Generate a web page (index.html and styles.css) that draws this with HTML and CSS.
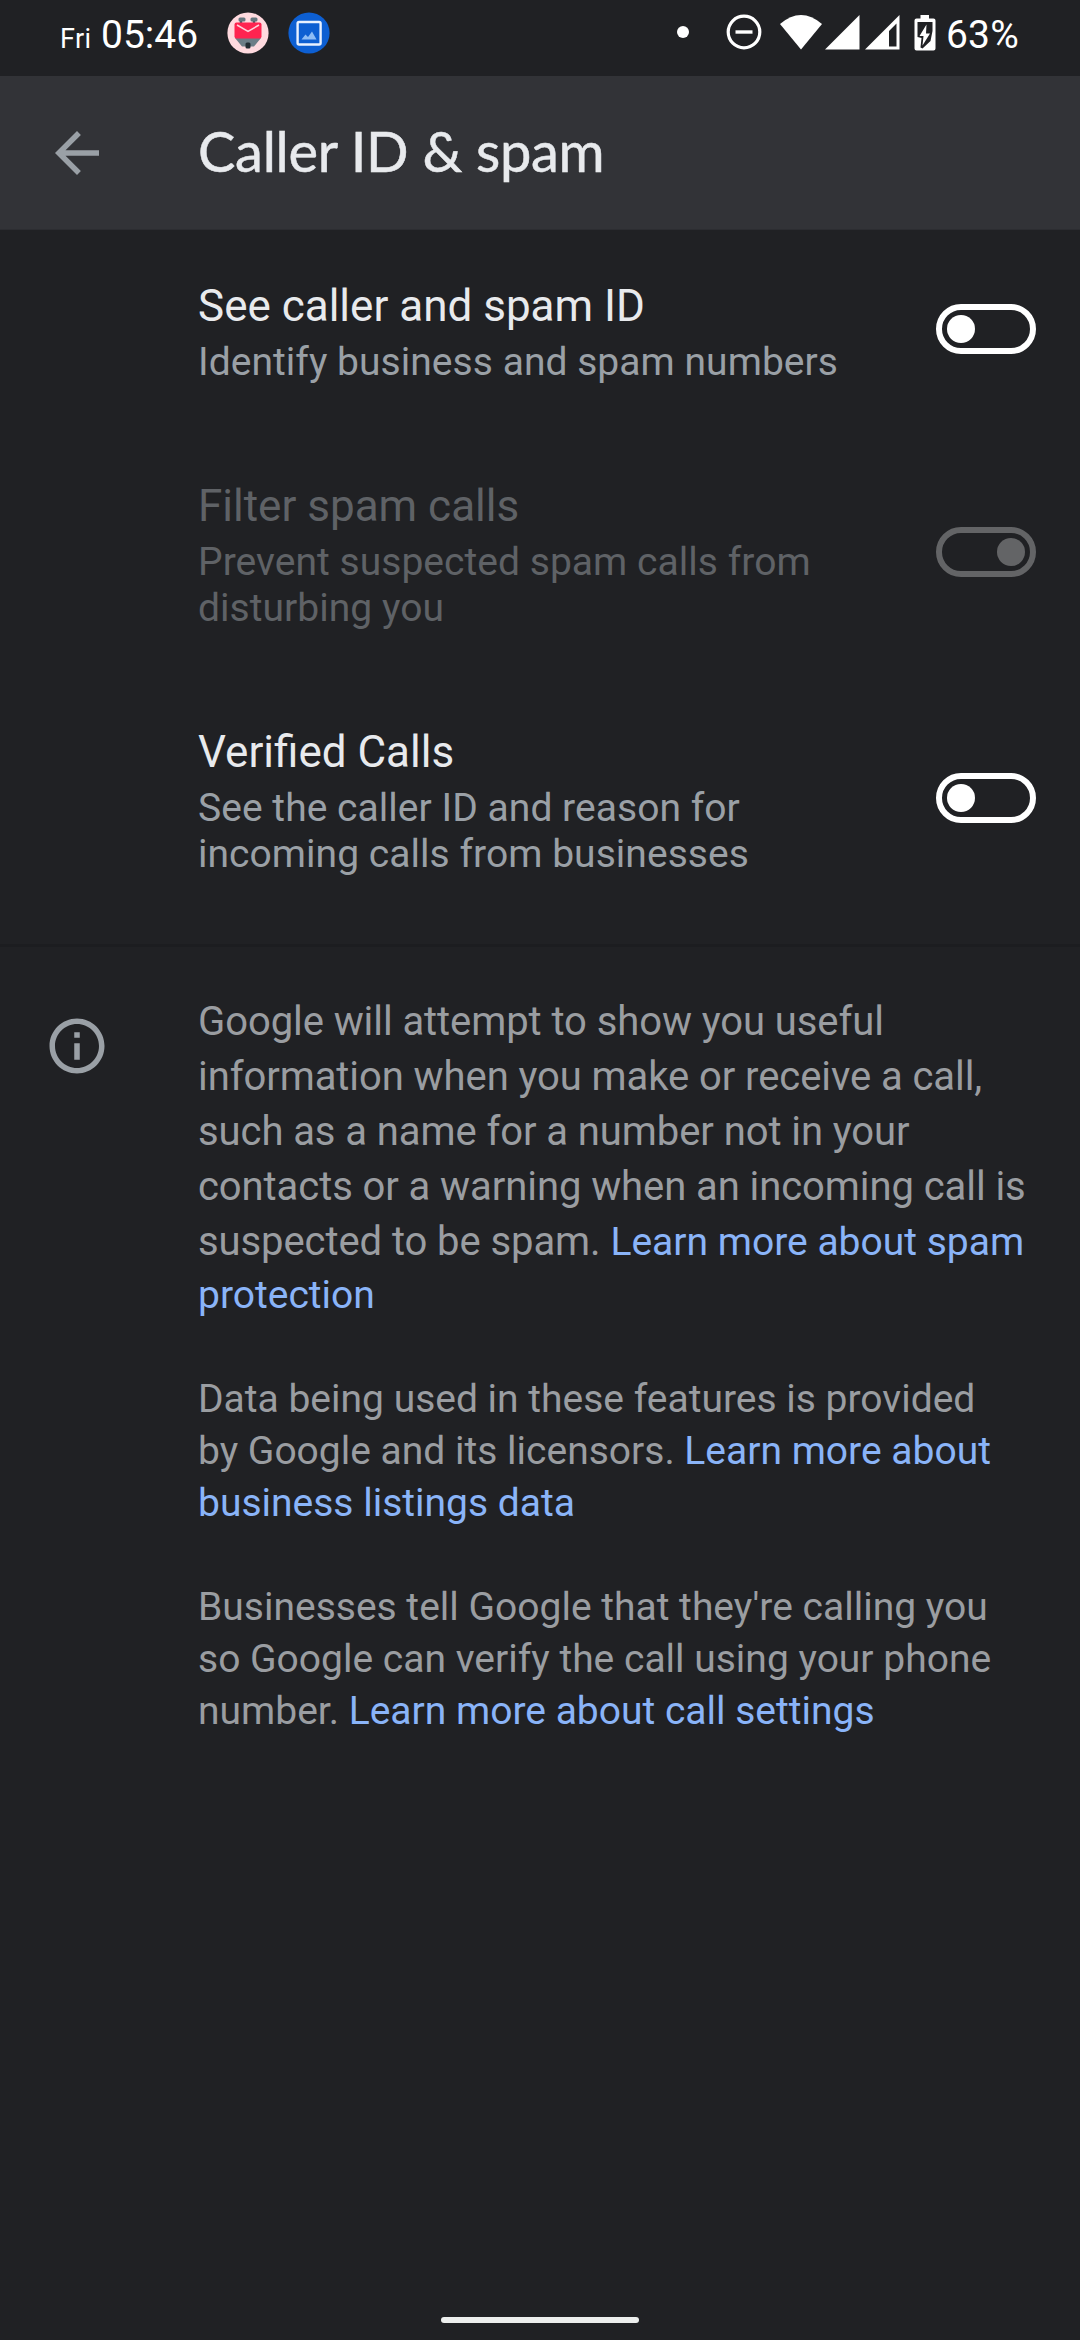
FILE: index.html
```
<!DOCTYPE html>
<html lang="en">
<head>
<meta charset="utf-8">
<title>Caller ID &amp; spam</title>
<link rel="stylesheet" href="styles.css">
</head>
<body>
<div class="screen">
  <header class="status">
    <span class="day">Fri</span>
    <span class="clock">05:46</span>
    <svg class="note note-mail" width="42" height="42" viewBox="0 0 42 42">
      <circle cx="21" cy="21" r="20.6" fill="#ffdadf"/>
      <path d="M14 8v4M27 8v4" stroke="#42545f" stroke-width="2.4"/>
      <rect x="11.5" y="5.5" width="7" height="4" rx="1.5" fill="#65777f"/>
      <rect x="23.5" y="5.5" width="7" height="4" rx="1.5" fill="#65777f"/>
      <path d="M8 26h26l-7 8.500H15z" fill="#6c7e87"/>
      <rect x="7.500" y="10.500" width="27" height="16" rx="2" fill="#ff2450"/>
      <path d="M10 13l11 6.500L32 13" fill="none" stroke="#ffd3dc" stroke-width="1.500"/>
      <rect x="18.500" y="30.500" width="5" height="6" rx="1.500" fill="#222d33"/>
    </svg>
    <svg class="note note-photo" width="42" height="42" viewBox="0 0 42 42">
      <circle cx="21" cy="21" r="20.6" fill="#0d5fd2"/>
      <rect x="9.600" y="10" width="23" height="22.500" rx="1.500" fill="none" stroke="#e8f1ff" stroke-width="2.400"/>
      <path d="M13.500 27.500l4-5 2.500 2.500 4-5.500 4.500 8z" fill="#8dbcf5"/>
    </svg>
    <svg class="dot" width="12" height="12" viewBox="0 0 12 12"><circle cx="6" cy="6" r="6" fill="#fff"/></svg>
    <svg class="dnd" width="36" height="36" viewBox="0 0 36 36">
      <circle cx="18" cy="18" r="15.800" fill="none" stroke="#fff" stroke-width="3.200"/>
      <path d="M9.500 18h17" stroke="#fff" stroke-width="3.400"/>
    </svg>
    <svg class="wifi" width="42" height="35" viewBox="0 0 42 35"><path d="M0 9Q21-9 42 9L21 34.500z" fill="#fff"/></svg>
    <svg class="signal" width="35" height="35" viewBox="0 0 35 35"><path d="M34.500 0v34.500H0z" fill="#fff"/></svg>
    <svg class="signal" width="35" height="35" viewBox="0 0 35 35"><path fill-rule="evenodd" d="M34.500 0v34.500H0zM31.500 8.500L24 16v15.500h7.500z" fill="#fff"/></svg>
    <svg class="battery" width="22" height="36" viewBox="0 0 22 36">
      <path d="M6.500 0h8.500v3.500h4.500a2 2 0 0 1 2 2v28a2 2 0 0 1-2 2h-17a2 2 0 0 1-2-2v-28a2 2 0 0 1 2-2h4z" fill="#fff"/>
      <path d="M3.500 7h15v9l-2 10-8 7.500-2-1 1-9.500-4-1z" fill="#202124"/>
      <path d="M12.500 9.500L5.500 21h4l-1 9.500 7.500-12h-4z" fill="#fff"/>
    </svg>
    <span class="percent">63%</span>
  </header>

  <div class="toolbar">
    <svg class="back" width="66" height="66" viewBox="0 0 24 24"><path d="M20 11H7.830l5.590-5.590L12 4l-8 8 8 8 1.410-1.410L7.830 13H20z" fill="#9aa0a6"/></svg>
    <h1 class="heading">Caller ID &amp; spam</h1>
  </div>

  <main>
    <section class="settings">
      <div class="row">
        <div class="text">
          <div class="title">See caller and spam ID</div>
          <div class="summary">Identify business and spam numbers</div>
        </div>
        <div class="switch"><i class="knob"></i></div>
      </div>
      <div class="row disabled">
        <div class="text">
          <div class="title">Filter spam calls</div>
          <div class="summary">Prevent suspected spam calls from<br>disturbing you</div>
        </div>
        <div class="switch on"><i class="knob"></i></div>
      </div>
      <div class="row">
        <div class="text">
          <div class="title">Verified Calls</div>
          <div class="summary">See the caller ID and reason for<br>incoming calls from businesses</div>
        </div>
        <div class="switch"><i class="knob"></i></div>
      </div>
    </section>

    <section class="info">
      <svg class="info-icon" width="66" height="66" viewBox="0 0 24 24"><path d="M11 7h2v2h-2zm0 4h2v6h-2zm1-9C6.480 2 2 6.480 2 12s4.480 10 10 10 10-4.480 10-10S17.520 2 12 2zm0 18c-4.410 0-8-3.590-8-8s3.590-8 8-8 8 3.590 8 8-3.590 8-8 8z" fill="#9aa0a6"/></svg>
      <div class="prose">
        <div class="lead">Google will attempt to show you useful</div>
        <div class="lead">information when you make or receive a call,</div>
        <div class="lead">such as a name for a number not in your</div>
        <div class="lead">contacts or a warning when an incoming call is</div>
        <div class="lead">suspected to be spam. <a class="link">Learn more about spam</a></div>
        <p class="para"><a class="link">protection</a></p>
        <p class="para">Data being used in these features is provided<br>by Google and its licensors. <a class="link">Learn more about<br>business listings data</a></p>
        <p class="para">Businesses tell Google that they're calling you<br>so Google can verify the call using your phone<br>number. <a class="link">Learn more about call settings</a></p>
      </div>
    </section>
  </main>
  <footer class="nav"><div class="pill"></div></footer>
</div>
</body>
</html>
```
FILE: styles.css
```
* { box-sizing: border-box; }
body { margin: 0; background: #202124; font-family: Roboto, "Liberation Sans", sans-serif; }
.screen { width: 1080px; height: 2340px; display: flex; flex-direction: column; overflow: hidden; }
svg { display: block; flex: none; }

.status { height: 76px; flex: none; display: flex; align-items: flex-start; padding-left: 60px; color: #fff; white-space: nowrap; }
.day { font-size: 27px; line-height: 32px; margin-top: 23px; width: 41px; letter-spacing: .4px; }
.clock { font-size: 39px; line-height: 46px; margin-top: 12px; width: 126px; }
.note { margin-top: 12px; }
.note-photo { margin-left: 19px; }
.dot { margin: 26px 0 0 347px; }
.dnd { margin: 14px 0 0 37px; }
.wifi { margin: 15px 3px 0 18px; }
.signal { margin: 15px 5px 0 0; }
.battery { margin: 15px 10px 0 9px; }
.percent { font-size: 39px; line-height: 46px; margin-top: 12px; letter-spacing: .2px; }

.toolbar { height: 154px; flex: none; display: flex; align-items: center; padding-left: 44px; background: #323337; border-bottom: 1px solid #2c2d31; }
.heading { margin: 0 0 3px 88px; font: 400 56px/66px Lato, "Noto Sans", sans-serif; letter-spacing: -.3px; -webkit-text-stroke: .5px #e8eaed; color: #e8eaed; white-space: nowrap; }

main { flex: 1; }
.settings { padding-bottom: 22px; border-bottom: 3px solid #1c1d20; }
.row { display: flex; justify-content: space-between; align-items: center; padding: 50px 44px 45px 198px; }
.title { font-size: 44px; line-height: 52px; color: #e8eaed; }
.summary { margin-top: 7px; font-size: 39px; line-height: 46px; letter-spacing: .04px; color: #9aa0a6; }
.text { white-space: nowrap; }
.disabled .title, .disabled .summary { color: #5f6266; }

.switch { width: 100px; height: 50px; margin-bottom: 7px; padding: 0 5px; border: 6px solid #fff; border-radius: 25px; display: flex; align-items: center; }
.knob { width: 28px; height: 28px; border-radius: 50%; background: #fff; }
.on { justify-content: flex-end; }
.disabled .switch { border-color: #636466; }
.disabled .knob { background: #636466; }

.info { display: flex; padding: 47px 0 0 44px; }
.info-icon { margin-top: 19px; }
.prose { margin-left: 88px; color: #9a9da1; white-space: nowrap; }
.lead { height: 55px; font-size: 40px; line-height: 55px; letter-spacing: -.08px; }
.para { margin: 0 0 52px; font-size: 39px; line-height: 52px; }
.link { font-size: 39px; line-height: 1; letter-spacing: 0; color: #8ab4f8; }

.nav { height: 23px; flex: none; display: flex; justify-content: center; }
.pill { width: 198px; height: 6px; border-radius: 3px; background: #eceeed; }
```
